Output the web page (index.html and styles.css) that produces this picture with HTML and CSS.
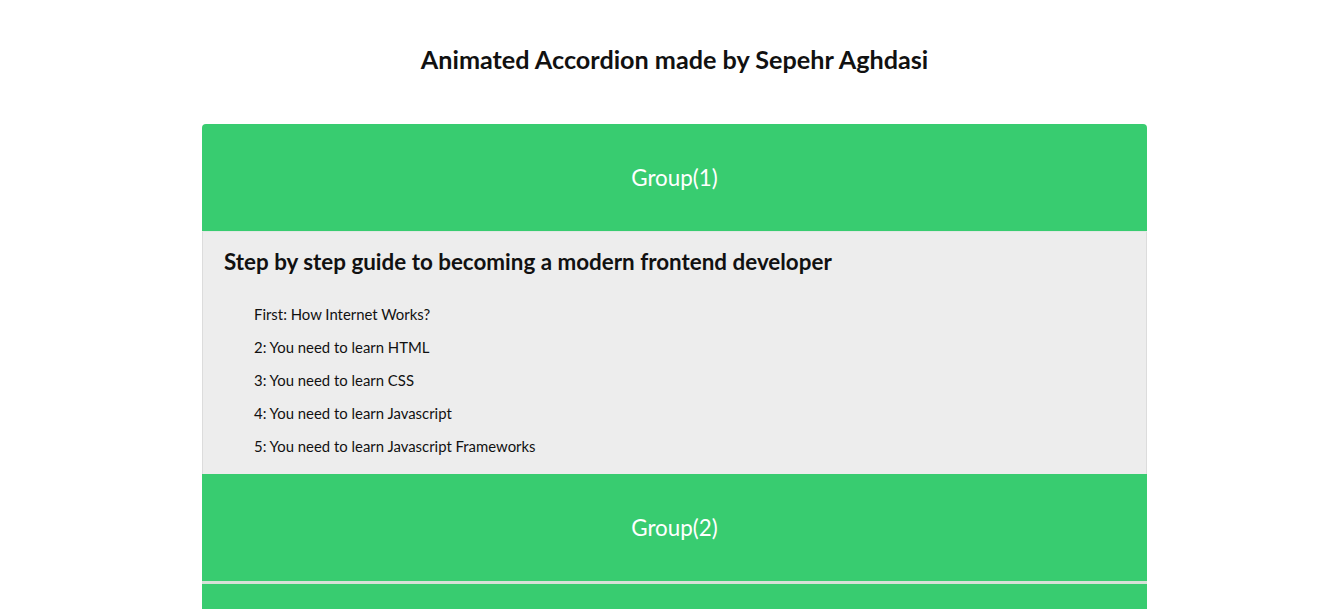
FILE: index.html
```html
<!DOCTYPE html>
<html>
<head>
<meta charset="utf-8">
<link rel="stylesheet" href="styles.css">
</head>
<body>
<h1 class="title">Animated Accordion made by Sepehr Aghdasi</h1>
<div class="accordion">
  <div class="group open">
    <div class="group-header">Group(1)</div>
    <div class="group-body">
      <h2 class="body-title">Step by step guide to becoming a modern frontend developer</h2>
      <ul class="steps">
        <li>First: How Internet Works?</li>
        <li>2: You need to learn HTML</li>
        <li>3: You need to learn CSS</li>
        <li>4: You need to learn Javascript</li>
        <li>5: You need to learn Javascript Frameworks</li>
      </ul>
    </div>
  </div>
  <div class="group">
    <div class="group-header">Group(2)</div>
  </div>
  <div class="group">
    <div class="group-header">Group(3)</div>
  </div>
</div>
</body>
</html>
```
FILE: styles.css
```css
html, body {
  margin: 0;
  padding: 0;
}
body {
  padding-left: 16px;
  font-family: Lato, "Liberation Sans", sans-serif;
  color: #111;
  background: #fff;
}
.title {
  margin: 0;
  padding-top: 43px;
  height: 80px;
  box-sizing: border-box;
  font-size: 25.2px;
  font-weight: 700;
  text-align: center;
  line-height: 32px;
}
.accordion {
  width: 945px;
  margin: 0 auto;
  padding-top: 44px;
}
.group-header {
  height: 107px;
  background: #38cc70;
  color: #fff;
  font-size: 22.4px;
  display: flex;
  align-items: center;
  justify-content: center;
  border-bottom: 3px solid #d6e0d8;
}
.group:first-child .group-header {
  border-radius: 4px 4px 0 0;
}
.group.open .group-header {
  border-bottom: 1px solid #e2e8e4;
}
.group-body {
  background: #ededed;
  border: 1px solid #dcdcdc;
  border-top: none;
  border-bottom: none;
  padding: 16px 21px 8px;
  height: 242px;
  box-sizing: border-box;
}
.body-title {
  margin: 0;
  font-size: 22.4px;
  font-weight: 700;
  line-height: 28px;
}
.steps {
  list-style: none;
  margin: 29px 0 0;
  padding-left: 30px;
}
.steps li {
  font-size: 14.9px;
  line-height: 18px;
  margin-bottom: 15px;
}
```
